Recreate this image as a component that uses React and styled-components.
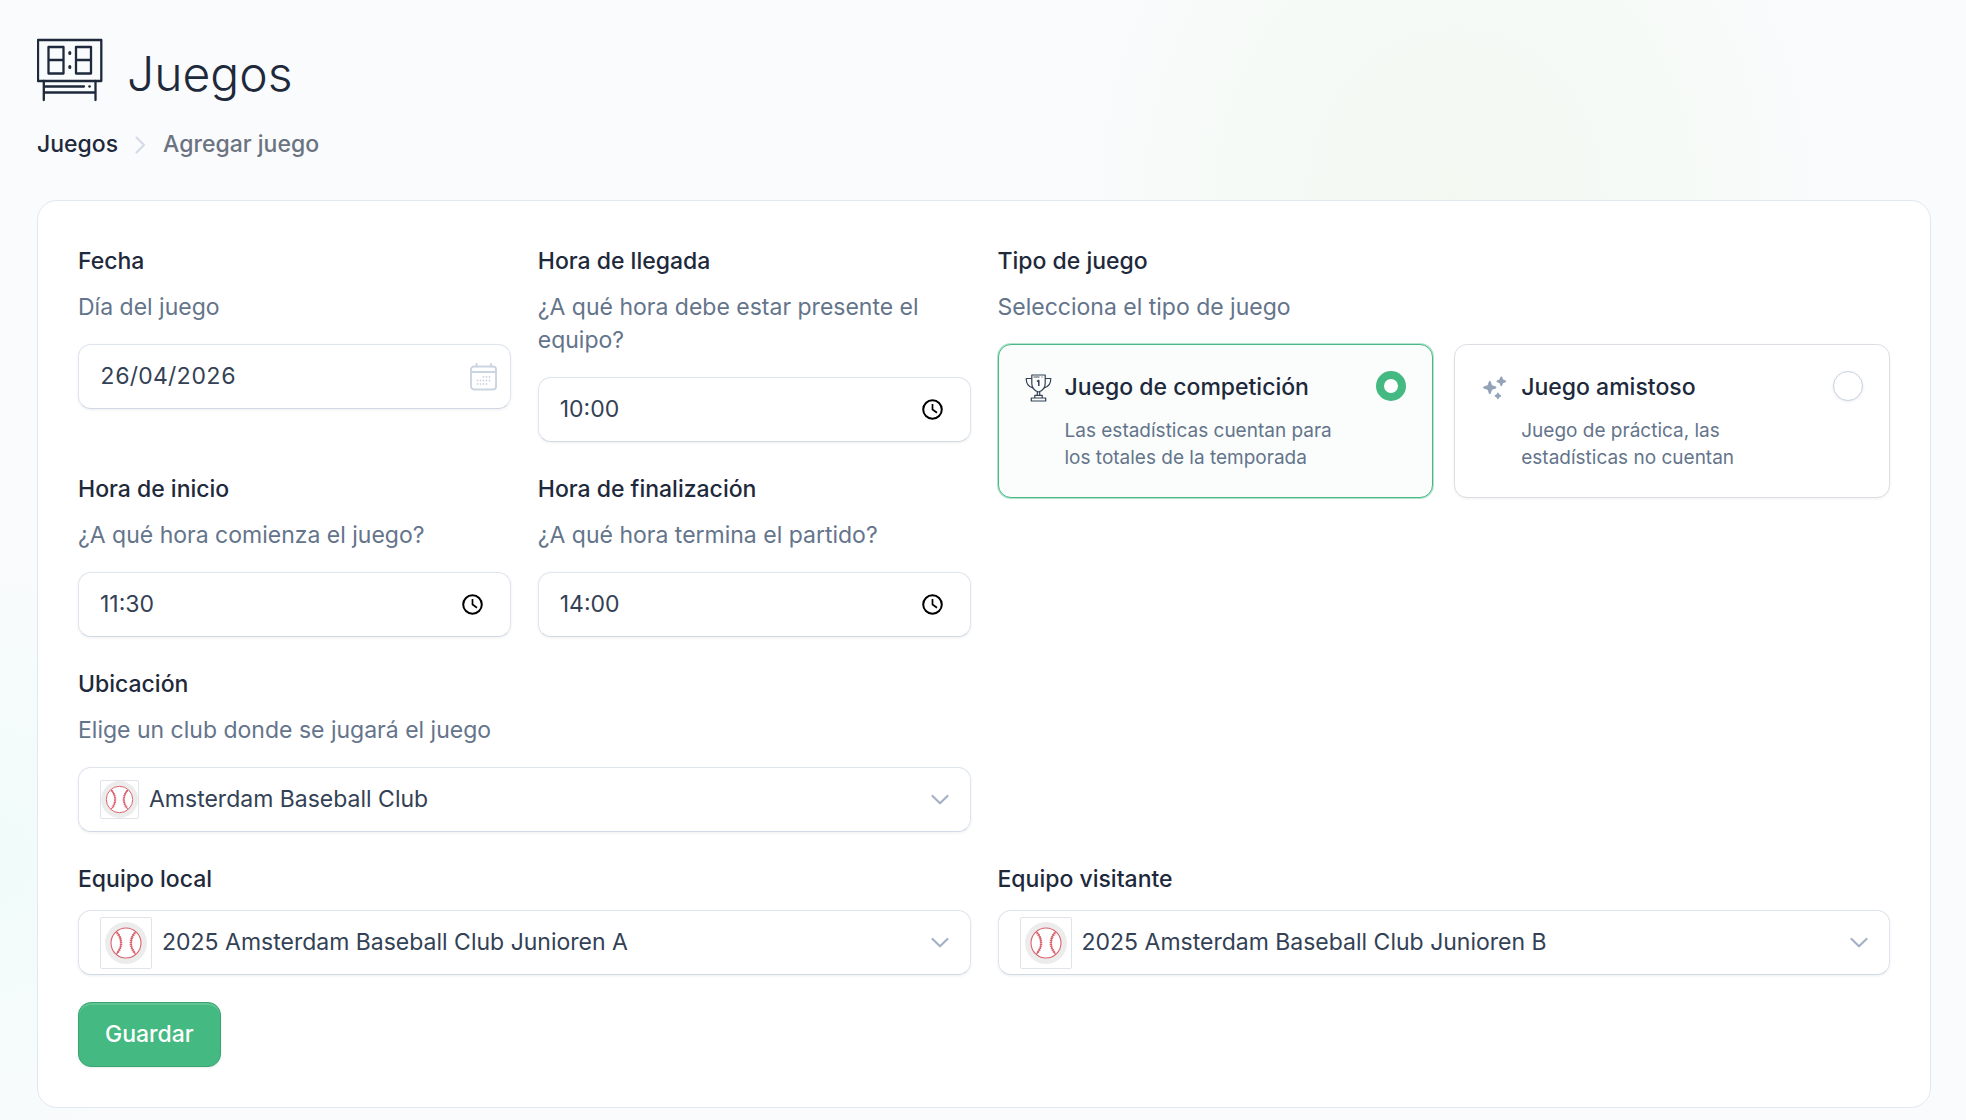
import React, { useState } from 'react';
import styled, { createGlobalStyle } from 'styled-components';

const GlobalStyle = createGlobalStyle`
  *, *::before, *::after { box-sizing: border-box; }

  body {
    margin: 0;
    min-height: 100vh;
    background:
      radial-gradient(ellipse 380px 440px at 74% 200px, #f3f8f1 0%, #f5faf6 50%, #f7faf9 80%, rgba(250, 251, 253, 0) 100%),
      radial-gradient(ellipse 240px 320px at 0 860px, #f0fcf9 0%, rgba(250, 251, 253, 0) 100%),
      #fafbfd;
    color: #1e293b;
    font-family: Inter, 'Liberation Sans', sans-serif;
    font-size: 23px;
    line-height: 33px;
    -webkit-font-smoothing: antialiased;
  }

  input, select, button { font: inherit; color: inherit; }
`;

// Page
const Page = styled.main`
  padding: 37px 35px 12px 37px;
`;

const Header = styled.header`
  display: flex;
  align-items: flex-end;
  gap: 24px;
`;

const Title = styled.h1`
  margin: 0;
  font-size: 48px;
  font-weight: 300;
  line-height: 58px;
`;

const Breadcrumb = styled.nav`
  display: flex;
  align-items: center;
  gap: 17px;
  margin: 25px 0 39px;
  font-weight: 500;
  color: #6b7280;

  a {
    color: #1e293b;
    text-decoration: none;
  }
`;

const Card = styled.form`
  padding: 40px;
  background: #fff;
  border: 1px solid #e2e8f0;
  border-radius: 20px;
`;

const Grid = styled.div`
  display: grid;
  grid-template-columns: repeat(4, minmax(0, 1fr));
  gap: 27px;
`;

// Fields
const Field = styled.div`
  grid-column: ${props => props.$start || 'auto'} / span ${props => props.$span || 1};
  grid-row: span ${props => props.$rows || 1};
  padding-top: 4px;
`;

const FieldLabel = styled.label`
  display: block;
  font-weight: 500;
`;

const Hint = styled.p`
  margin: 13px 0 20px;
  color: #64748b;
`;

const Control = styled.div`
  display: flex;
  align-items: center;
  gap: ${props => props.$gap || 0}px;
  height: 65px;
  margin-top: ${props => props.$top || 0}px;
  padding: 0 ${props => props.$right || 21}px 0 21px;
  background: #fff;
  border: 1px solid #dfe5ee;
  border-bottom-color: #d0d9e6;
  border-radius: 13px;
  box-shadow: 0 1px 3px rgba(15, 23, 42, 0.07);
  color: #334155;

  svg { flex: none; }
`;

const TextInput = styled.input`
  flex: 1;
  min-width: 0;
  padding: 0;
  border: 0;
  outline: 0;
  background: transparent;
  font-variant-numeric: ${props => (props.$tabular ? 'tabular-nums' : 'normal')};
`;

const Select = styled.select`
  flex: 1;
  min-width: 0;
  height: 100%;
  padding: 0;
  border: 0;
  outline: 0;
  background: transparent;
  appearance: none;
`;

const Logo = styled.span`
  display: flex;
  flex: none;
  width: ${props => props.$size}px;
  height: ${props => props.$size}px;
  padding: ${props => props.$inset || 0}px;
  border: 1px solid #e0e4ea;
  border-radius: 2px;
`;

const IconButton = styled.button`
  display: flex;
  padding: 0;
  border: 0;
  background: none;
  color: ${props => props.$color};
  cursor: pointer;
`;

// Game type options
const Options = styled.div`
  display: grid;
  grid-template-columns: 1fr 1fr;
  gap: 21px;
`;

const Option = styled.label`
  display: flex;
  align-items: flex-start;
  gap: 13px;
  padding: 26px;
  background: ${props => (props.$checked ? '#fafdfb' : '#fff')};
  border: 1px solid ${props => (props.$checked ? '#48b984' : '#dcdfe4')};
  border-radius: 13px;
  box-shadow: ${props => (props.$checked ? '0 0 0 1px rgba(72, 185, 132, 0.4)' : '0 1px 3px rgba(15, 23, 42, 0.06)')};
  cursor: pointer;

  svg {
    flex: none;
    margin-top: 3px;
  }
`;

const OptionText = styled.span`
  display: flex;
  flex: 1;
  flex-direction: column;
  gap: 13px;
  padding-right: 13px;
`;

const OptionTitle = styled.span`
  font-weight: 500;
`;

const OptionHint = styled.span`
  color: #64748b;
  font-size: 19px;
  line-height: 27px;
`;

const Radio = styled.input`
  appearance: none;
  flex: none;
  width: 30px;
  height: 30px;
  margin: 0;
  background: #fff;
  border: 1px solid #c6d1e0;
  border-radius: 50%;
  box-shadow: 0 1px 3px rgba(15, 23, 42, 0.08);

  &:checked {
    border: 8px solid #44b981;
    box-shadow: none;
  }
`;

const SaveButton = styled.button`
  height: 65px;
  margin-top: 27px;
  padding: 0 26px;
  background: #44b981;
  border: 1px solid #38a570;
  border-radius: 13px;
  box-shadow: inset 0 2px 0 rgba(255, 255, 255, 0.16), 0 1px 2px rgba(15, 23, 42, 0.08);
  color: #fff;
  font-weight: 500;
  cursor: pointer;
`;

// Icons
const ScoreboardIcon = () => (
  <svg width="66" height="66" viewBox="2 0 66 66" fill="none" stroke="currentColor" strokeWidth="2.300" strokeLinecap="round" strokeLinejoin="round" aria-hidden="true">
    <path d="M3 3h63.300v41h-63.300z" />
    <path d="M13.500 10h15v26.500h-15zM13.500 23h15M41 10h15v26.500h-15zM41 23h15" />
    <path d="M34.800 15.500v1M34.800 29.500v1" strokeWidth="3" />
    <path d="M8.800 44v19M60.500 44v19M10.500 49.500H49M54.300 49.500h.5M8.800 55.500h51.700" />
  </svg>
);

const ChevronRight = () => (
  <svg width="11" height="18" viewBox="0 0 11 18" fill="none" stroke="#d3dae5" strokeWidth="2" strokeLinecap="round" strokeLinejoin="round" aria-hidden="true">
    <path d="M1.500 1.500 9 9l-7.500 7.500" />
  </svg>
);

const ChevronDown = () => (
  <svg width="18" height="11" viewBox="0 0 18 11" fill="none" stroke="#a5b2c5" strokeWidth="2.200" strokeLinecap="round" strokeLinejoin="round" aria-hidden="true">
    <path d="M1.500 2 9 9.300 16.500 2" />
  </svg>
);

const calendarDots = [
  [13.5, 14], [16.5, 14], [19.5, 14],
  [7.5, 17.5], [10.5, 17.5], [13.5, 17.5], [16.5, 17.5], [19.5, 17.5],
  [7.5, 21], [10.5, 21], [13.5, 21], [16.5, 21],
];

const CalendarIcon = () => (
  <svg width="27" height="28" viewBox="0 0 27 28" fill="none" stroke="currentColor" strokeWidth="1.900" strokeLinecap="round" aria-hidden="true">
    <rect x="1" y="3.500" width="25" height="23" rx="3" />
    <path d="M1 9h25M6.500 .9v2.500M21 .9v2.500" />
    {calendarDots.map(([x, y]) => (
      <circle key={`${x}-${y}`} cx={x} cy={y} r="0.900" fill="currentColor" stroke="none" />
    ))}
  </svg>
);

const ClockIcon = () => (
  <svg width="22" height="22" viewBox="0 0 22 22" fill="none" stroke="currentColor" strokeWidth="2" aria-hidden="true">
    <circle cx="10.500" cy="10.500" r="9.300" />
    <path d="M10.500 5v5.500l4.500 3.200" strokeWidth="1.700" />
  </svg>
);

const TrophyIcon = () => (
  <svg width="27" height="28" viewBox="0 0 27 28" fill="none" stroke="#334155" strokeWidth="1.200" strokeLinejoin="round" aria-hidden="true">
    <path d="M6.800 1h13.400v8.500c0 4-3 7.300-6.700 8.500-3.700-1.200-6.700-4.500-6.700-8.500z" />
    <path d="M6.800 4.500H1.200c0 5.500 2.500 8.500 6.800 9.300M20.200 4.500h5.600c0 5.500-2.500 8.500-6.800 9.300" />
    <path d="M8.500 3h6M16.500 3h1" strokeWidth="0.900" />
    <path d="M12 7.500l1.800-1V12" strokeWidth="1.500" />
    <path d="M12.300 18v3.200M14.700 18v3.200M9.800 21.300h7.400v2.700H9.800zM6.300 24h14.400v3H6.300z" />
  </svg>
);

const SparklesIcon = () => (
  <svg width="27" height="27" viewBox="0 0 27 27" fill="#94a3b8" stroke="#94a3b8" strokeWidth="1.900" strokeLinejoin="round" aria-hidden="true">
    <path d="M8.800 7.800l1.500 4.200 4.200 1.500-4.200 1.500-1.500 4.200L7.300 15l-4.200-1.500L7.300 12z" />
    <path d="M20.300 3.400l1.100 2.800 2.800 1.100-2.800 1.100-1.100 2.800-1.100-2.800-2.800-1.100 2.800-1.100z" />
    <path d="M16.900 19.600l.7 1.600 1.600.7-1.600.7-.7 1.600-.7-1.600-1.600-.7 1.600-.7z" />
  </svg>
);

const BaseballIcon = () => (
  <svg width="100%" height="100%" viewBox="0 0 42 42" fill="none" aria-hidden="true">
    <circle cx="21" cy="21" r="21" fill="#ececec" />
    <circle cx="21" cy="21" r="15" fill="#fff" stroke="#d9606c" strokeWidth="1.100" />
    <path d="M11.500 10c6 6 6 16 0 22M30.500 10c-6 6-6 16 0 22" stroke="#d9606c" strokeWidth="1.200" />
    <path d="M12 11c5.500 6 5.500 14 0 20M30 11c-5.500 6-5.500 14 0 20" stroke="#d9606c" strokeWidth="2.600" strokeDasharray="1 1" />
  </svg>
);

const TimeField = ({ id, label, hint, defaultValue }) => (
  <Field>
    <FieldLabel htmlFor={id}>{label}</FieldLabel>
    <Hint>{hint}</Hint>
    <Control $right={26}>
      <TextInput id={id} type="text" inputMode="numeric" defaultValue={defaultValue} />
      <IconButton type="button" aria-label="Elegir hora" $color="#000">
        <ClockIcon />
      </IconButton>
    </Control>
  </Field>
);

const TeamField = ({ id, label, team, start }) => (
  <Field $start={start} $span={2}>
    <FieldLabel htmlFor={id}>{label}</FieldLabel>
    <Control $gap={10} $top={14}>
      <Logo $size={52} $inset={4}>
        <BaseballIcon />
      </Logo>
      <Select id={id} defaultValue={team}>
        <option value={team}>{team}</option>
      </Select>
      <ChevronDown />
    </Control>
  </Field>
);

const gameTypes = [
  {
    value: 'competition',
    icon: <TrophyIcon />,
    title: 'Juego de competición',
    hint: 'Las estadísticas cuentan para los totales de la temporada',
  },
  {
    value: 'friendly',
    icon: <SparklesIcon />,
    title: 'Juego amistoso',
    hint: 'Juego de práctica, las estadísticas no cuentan',
  },
];

/**
 * Add game page
 */
const App = () => {
  const [gameType, setGameType] = useState('competition');

  return (
    <>
      <GlobalStyle />
      <Page>
        <Header>
          <ScoreboardIcon />
          <Title>Juegos</Title>
        </Header>

        <Breadcrumb aria-label="Ruta">
          <a href="#juegos">Juegos</a>
          <ChevronRight />
          <span>Agregar juego</span>
        </Breadcrumb>

        <Card onSubmit={(e) => e.preventDefault()}>
          <Grid>
            <Field>
              <FieldLabel htmlFor="date">Fecha</FieldLabel>
              <Hint>Día del juego</Hint>
              <Control $right={13}>
                <TextInput id="date" type="text" $tabular defaultValue="26/04/2026" />
                <IconButton type="button" aria-label="Elegir fecha" $color="#cbd5e1">
                  <CalendarIcon />
                </IconButton>
              </Control>
            </Field>

            <TimeField id="arrival" label="Hora de llegada" hint="¿A qué hora debe estar presente el equipo?" defaultValue="10:00" />

            <Field $span={2} $rows={2} role="radiogroup" aria-labelledby="type-label">
              <FieldLabel as="div" id="type-label">Tipo de juego</FieldLabel>
              <Hint>Selecciona el tipo de juego</Hint>
              <Options>
                {gameTypes.map((type) => (
                  <Option key={type.value} $checked={gameType === type.value}>
                    {type.icon}
                    <OptionText>
                      <OptionTitle>{type.title}</OptionTitle>
                      <OptionHint>{type.hint}</OptionHint>
                    </OptionText>
                    <Radio
                      type="radio"
                      name="gameType"
                      value={type.value}
                      checked={gameType === type.value}
                      onChange={() => setGameType(type.value)}
                    />
                  </Option>
                ))}
              </Options>
            </Field>

            <TimeField id="start" label="Hora de inicio" hint="¿A qué hora comienza el juego?" defaultValue="11:30" />
            <TimeField id="end" label="Hora de finalización" hint="¿A qué hora termina el partido?" defaultValue="14:00" />

            <Field $start={1} $span={2}>
              <FieldLabel htmlFor="club">Ubicación</FieldLabel>
              <Hint>Elige un club donde se jugará el juego</Hint>
              <Control $gap={10}>
                <Logo $size={39}>
                  <BaseballIcon />
                </Logo>
                <Select id="club" defaultValue="amsterdam">
                  <option value="amsterdam">Amsterdam Baseball Club</option>
                </Select>
                <ChevronDown />
              </Control>
            </Field>

            <TeamField id="home" start={1} label="Equipo local" team="2025 Amsterdam Baseball Club Junioren A" />
            <TeamField id="away" label="Equipo visitante" team="2025 Amsterdam Baseball Club Junioren B" />
          </Grid>

          <SaveButton type="submit">Guardar</SaveButton>
        </Card>
      </Page>
    </>
  );
};

export default App;
